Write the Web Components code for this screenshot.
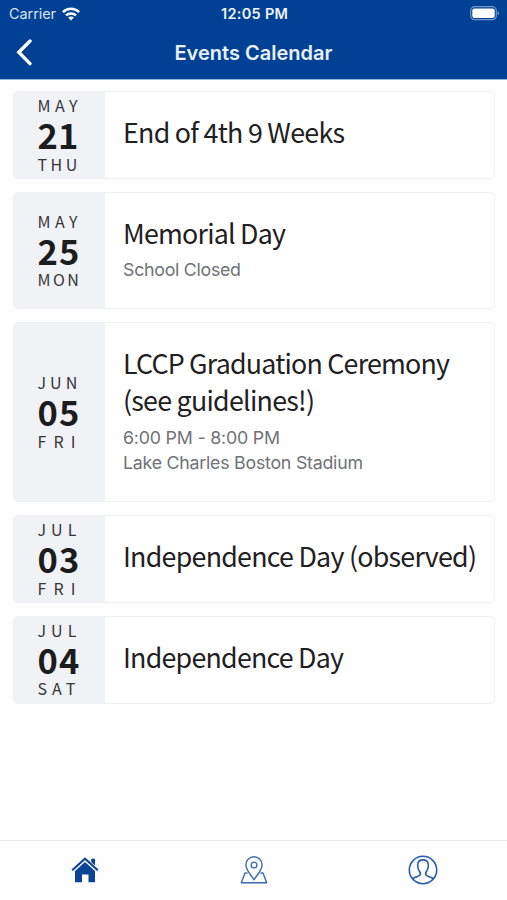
<!DOCTYPE html>
<html lang="en">
<head>
<meta charset="utf-8">
<title>Events Calendar</title>
<style>
    html, body {
        margin: 0;
        height: 100%;
    }

    body {
        font-family: Inter, "Liberation Sans", sans-serif;
        background-color: #fefefe;
        overflow: hidden;
    }
</style>
</head>
<body>
<events-app></events-app>

<script>
// One line of text, tracked so that it takes the width given in "w"
class FitText extends HTMLElement {
    constructor() {
        super();
        this.attachShadow({mode: 'open'});
        this.shadowRoot.innerHTML = `
        <style>
            :host {
                display: block;
                white-space: nowrap;
            }

            span {
                display: inline-block;
            }
        </style>
        <span><slot></slot></span>
        `;
    }

    connectedCallback() {
        const span = this.shadowRoot.querySelector('span');
        const count = this.textContent.length - 1;
        const width = parseFloat(this.getAttribute('w'));
        const natural = span.getBoundingClientRect().width;
        const spacing = (width - natural) / count;
        span.style.letterSpacing = spacing + 'px';
        span.style.marginRight = -spacing + 'px';
    }
}

class StatusBar extends HTMLElement {
    constructor() {
        super();
        this.attachShadow({mode: 'open'});
        this.shadowRoot.innerHTML = `
        <style>
            :host {
                display: grid;
                grid-template-columns: 1fr auto 1fr;
                align-items: center;
                height: 27px;
                padding: 0 7px 0 9px;
                box-sizing: border-box;
                color: #fff;
                font-size: 14.5px;
                line-height: 27px;
            }

            .carrier {
                display: flex;
                align-items: center;
                gap: 6px;
                color: #d5e1f2;
            }

            .time {
                font-weight: 600;
                color: #f0f5fc;
            }

            .battery {
                justify-self: end;
            }

            svg {
                display: block;
            }
        </style>
        <div class="carrier">
            <fit-text w="47">Carrier</fit-text>
            <svg width="18" height="14" viewBox="0 0 18 14" fill="none" stroke="#fff" stroke-width="2.5">
                <path d="M.9 5.1C5.5.6 12.5.6 17.1 5.1"/>
                <path d="M3.9 8.4C6.8 5.7 11.2 5.7 14.1 8.4"/>
                <path d="M9 13.5 6.1 10.6C7.7 9.1 10.3 9.1 11.9 10.6Z" fill="#fff" stroke="none"/>
            </svg>
        </div>
        <fit-text class="time" w="67">12:05 PM</fit-text>
        <svg class="battery" width="30" height="15" viewBox="0 0 30 15">
            <rect x=".7" y=".7" width="25.6" height="13" rx="4" fill="none" stroke="#7597c7" stroke-width="1.2"/>
            <rect x="2.3" y="2.4" width="22.4" height="9.6" rx="2.2" fill="#fff"/>
            <path d="M27.6 5.2C29.6 5.9 29.6 8.5 27.6 9.2Z" fill="#7597c7"/>
        </svg>
        `;
    }
}

class NavHeader extends HTMLElement {
    constructor() {
        super();
        this.attachShadow({mode: 'open'});
        this.shadowRoot.innerHTML = `
        <style>
            :host {
                display: grid;
                grid-template-columns: 1fr auto 1fr;
                align-items: center;
                height: 52px;
                padding: 0 16px;
                box-sizing: border-box;
                color: #e9f1fc;
                font-size: 20px;
                font-weight: 600;
                line-height: 50px;
            }

            svg {
                display: block;
                margin-bottom: 2px;
            }
        </style>
        <svg width="17" height="28" viewBox="0 0 17 28" fill="none" stroke="#fff" stroke-width="3.4" stroke-linecap="round">
            <path d="M14 3 2.8 14.3 14 25.6"/>
        </svg>
        <slot></slot>
        `;
    }
}

class EventCard extends HTMLElement {
    constructor() {
        super();
        this.attachShadow({mode: 'open'});
        this.shadowRoot.innerHTML = `
        <style>
            :host {
                display: flex;
                box-sizing: border-box;
                border: 1px solid #eff1f3;
                border-radius: 5px;
                background-color: #fff;
                overflow: hidden;
                color: #1f2022;
            }

            .date {
                display: flex;
                flex-direction: column;
                justify-content: center;
                width: 91px;
                flex: none;
                padding: 0 0 1.2px 23.4px;
                box-sizing: border-box;
                background-color: #f1f2f6;
                font-family: "Noto Sans CJK JP", "Noto Sans", sans-serif;
            }

            .body {
                display: flex;
                flex-direction: column;
                padding: 22px 0 0 18px;
            }

            .title {
                margin-bottom: 5.6px;
                font-family: "Noto Sans CJK JP", "Noto Sans", sans-serif;
                font-size: 26.8px;
                line-height: 36.8px;
            }

            .info {
                color: #707276;
                font-size: 17.8px;
                line-height: 25.8px;
            }

            ::slotted([slot="month"]), ::slotted([slot="weekday"]) {
                font-size: 16px;
                line-height: 22px;
                color: #35363a;
            }

            ::slotted([slot="day"]) {
                font-size: 34.5px;
                font-weight: 700;
                line-height: 36.6px;
                color: #1b1c1e;
            }
        </style>
        <div class="date">
            <slot name="month"></slot>
            <slot name="day"></slot>
            <slot name="weekday"></slot>
        </div>
        <div class="body">
            <div class="title"><slot name="title"></slot></div>
            <div class="info"><slot></slot></div>
        </div>
        `;
    }
}

class TabBar extends HTMLElement {
    constructor() {
        super();
        this.attachShadow({mode: 'open'});
        this.shadowRoot.innerHTML = `
        <style>
            :host {
                display: grid;
                grid-template-columns: repeat(3, 1fr);
                justify-items: center;
                align-items: center;
                height: 60px;
                padding-bottom: 1px;
                box-sizing: border-box;
                border-top: 1.5px solid #ebeced;
                background-color: #fefefe;
            }

            svg {
                display: block;
            }
        </style>
        <svg width="30" height="30" viewBox="0 0 30 30" fill="#0b4399">
            <path d="M5 15.9 15 6.9 25 15.9V27.3H18.5V19.5H12V27.3H5Z"/>
            <path d="M21.2 3.7H25V11.5L21.2 8Z"/>
            <path d="M2.2 15.2 15 3.7 27.8 15.2" fill="none" stroke="#fefefe" stroke-width="3.3"/>
            <path d="M2.2 15.2 15 3.7 27.8 15.2" fill="none" stroke="#0b4399" stroke-width="2.1"/>
        </svg>
        <svg width="30" height="30" viewBox="0 0 30 30" fill="none" stroke="#3c6bb1" stroke-width="1.4" stroke-linejoin="round">
            <path d="M15 24.8C13.5 21.5 6.9 16 6.9 9.8A8.1 8.1 0 0 1 23.1 9.8C23.1 16 16.5 21.5 15 24.8Z"/>
            <circle cx="15" cy="10" r="2.9"/>
            <path d="M8.5 18H6L2.3 27.7H27.7L24 18H21.5"/>
        </svg>
        <svg width="30" height="30" viewBox="0 0 30 30" fill="none" stroke="#2a5eab" stroke-width="1.6">
            <circle cx="15" cy="15" r="13.7"/>
            <path d="M4.5 23.8C6.5 21.7 10.5 21.7 11.9 20.3C13.1 18.8 12.3 17.3 11.1 15.7C9.5 13.5 9.6 11.5 9.7 9.5C10 6.5 12 4.9 15 4.9S20 6.5 20.3 9.5C20.4 11.5 20.5 13.5 18.9 15.7C17.7 17.3 16.9 18.8 18.1 20.3C19.5 21.7 23.5 21.7 25.5 23.8"/>
        </svg>
        `;
    }
}

class EventsApp extends HTMLElement {
    constructor() {
        super();
        this.attachShadow({mode: 'open'});
    }

    connectedCallback() {
        this.render();
    }

    render() {
        this.shadowRoot.innerHTML = `
        <style>
            :host {
                display: flex;
                flex-direction: column;
                height: 900px;
            }

            header {
                flex: none;
                background-color: #014195;
                border-bottom: 1px solid #8db2dc;
            }

            main {
                display: flex;
                flex-direction: column;
                gap: 13.2px;
                flex: 1;
                padding: 11px 12px 0 13px;
            }

            event-card {
                height: 87.7px;
                flex: none;
            }
        </style>
        <header>
            <status-bar></status-bar>
            <nav-header><fit-text w="158">Events Calendar</fit-text></nav-header>
        </header>
        <main></main>
        <tab-bar></tab-bar>
        `;

        // each text is followed by its width
        const events = [
            {month: ['MAY', 40], day: ['21', 41], weekday: ['THU', 40], title: [['End of 4th 9 Weeks', 222]], info: []},
            {month: ['MAY', 40], day: ['25', 42], weekday: ['MON', 41.5], title: [['Memorial Day', 163]], info: [['School Closed', 118]], height: 117.4},
            {month: ['JUN', 40], day: ['05', 42], weekday: ['FRI', 38], title: [['LCCP Graduation Ceremony', 327], ['(see guidelines!)', 192]], info: [['6:00 PM - 8:00 PM', 157], ['Lake Charles Boston Stadium', 240]], height: 179.4},
            {month: ['JUL', 39], day: ['03', 42], weekday: ['FRI', 38], title: [['Independence Day (observed)', 354]], info: []},
            {month: ['JUL', 39], day: ['04', 42], weekday: ['SAT', 38], title: [['Independence Day', 221]], info: []}
        ];

        const main = this.shadowRoot.querySelector('main');

        events.forEach((event) => {
            const card = document.createElement('event-card');
            if (event.height) {
                card.style.height = event.height + 'px';
            }

            const line = ([text, width], slot) =>
                `<fit-text w="${width}"${slot ? ` slot="${slot}"` : ''}>${text}</fit-text>`;

            main.appendChild(card);
            card.innerHTML =
                line(event.month, 'month') +
                line(event.day, 'day') +
                line(event.weekday, 'weekday') +
                event.title.map((t) => line(t, 'title')).join('') +
                event.info.map((t) => line(t)).join('');
        });
    }
}

customElements.define('fit-text', FitText);
customElements.define('status-bar', StatusBar);
customElements.define('nav-header', NavHeader);
customElements.define('event-card', EventCard);
customElements.define('tab-bar', TabBar);
customElements.define('events-app', EventsApp);
</script>
</body>
</html>
